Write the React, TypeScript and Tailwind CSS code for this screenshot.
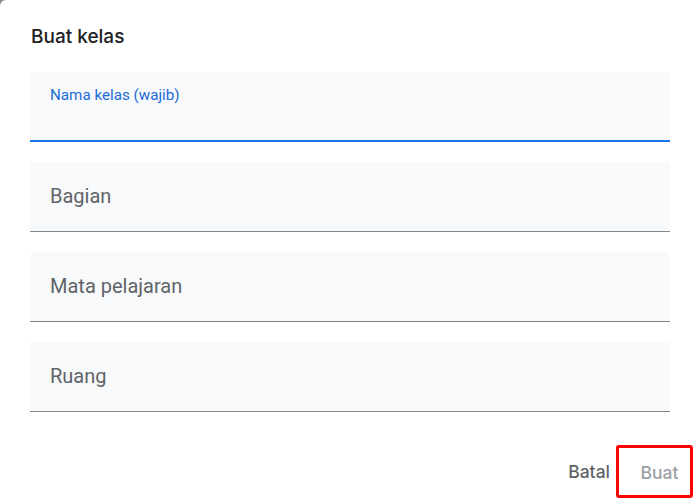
import React from "react";

function Field({ label }: { label: string }) {
  return (
    <div className="h-[70px] bg-[#f8f9fa] rounded-t-[4px] border-b border-[#80868b] flex items-center px-5">
      <span className="text-[20px] text-[#5f6368] font-['Roboto',sans-serif] pb-[1px]">{label}</span>
    </div>
  );
}

export default function App() {
  return (
    <div className="w-[697px] h-[503px] bg-[#8a8a8a]">
      <div className="w-full h-full bg-white rounded-tl-[6px] flex flex-col pl-[30px] pr-[27px]">
        <div className="pt-[25px] h-[72px]">
          <h1 className="text-[19px] font-medium text-[#202124] font-['Inter',sans-serif] leading-[24px] pl-[1px]">Buat kelas</h1>
        </div>
        <div className="flex flex-col gap-[20px]">
          <div className="h-[70px] bg-[#f8f9fa] rounded-t-[4px] border-b-2 border-[#1a73e8] px-5 pt-[10px]">
            <span className="text-[15.2px] text-[#1a6cd6] font-['Roboto',sans-serif] leading-[20px]">Nama kelas (wajib)</span>
          </div>
          <Field label="Bagian" />
          <Field label="Mata pelajaran" />
          <Field label="Ruang" />
        </div>
        <div className="flex justify-end items-center mt-[33px] pr-0">
          <button className="text-[17.5px] font-medium text-[#5f6368] font-['Inter',sans-serif] mr-[6px] pt-[1px]">Batal</button>
          <div className="w-[77px] h-[53px] border-[3px] border-[#ff0000] rounded-[3px] flex items-center justify-center -mr-[23px]">
            <span className="text-[17.5px] font-medium text-[#9aa0a6] font-['Inter',sans-serif] pt-[3px] pl-[10px]">Buat</span>
          </div>
        </div>
      </div>
    </div>
  );
}
